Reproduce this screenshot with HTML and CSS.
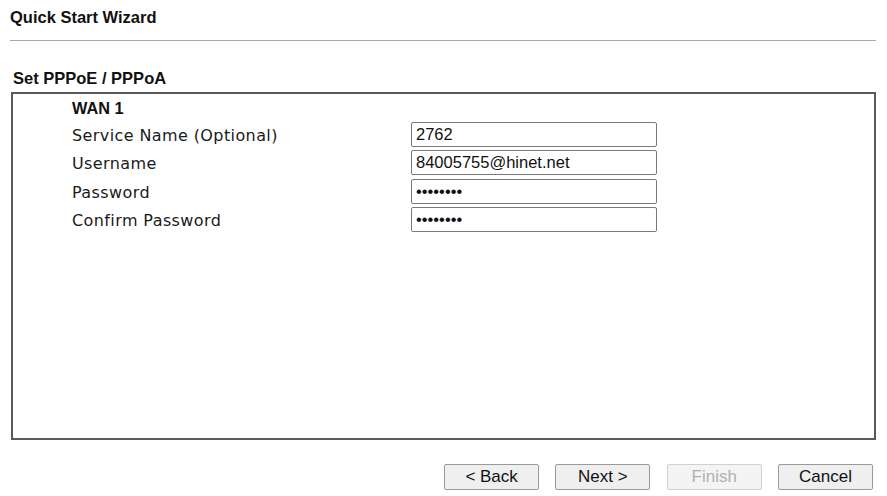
FILE: index.html
```html
<!DOCTYPE html>
<html>
<head>
<meta charset="utf-8">
<link rel="stylesheet" href="styles.css">
</head>
<body>
<div class="page">
  <h1 class="title">Quick Start Wizard</h1>
  <hr class="rule">
  <h2 class="section">Set PPPoE / PPPoA</h2>
  <div class="box">
    <div class="wan">WAN 1</div>
    <div class="row"><span class="label">Service Name (Optional)</span><input class="field" type="text" value="2762"></div>
    <div class="row"><span class="label">Username</span><input class="field" type="text" value="84005755@hinet.net"></div>
    <div class="row"><span class="label">Password</span><input class="field" type="password" value="12345678"></div>
    <div class="row"><span class="label">Confirm Password</span><input class="field" type="password" value="12345678"></div>
  </div>
  <div class="buttons">
    <button class="btn">&lt; Back</button>
    <button class="btn">Next &gt;</button>
    <button class="btn" disabled>Finish</button>
    <button class="btn">Cancel</button>
  </div>
</div>
</body>
</html>
```
FILE: styles.css
```css
html, body {
  margin: 0;
  padding: 0;
  background: #fff;
}
.page {
  width: 887px;
  height: 496px;
  box-sizing: border-box;
  padding: 0 11px 0 10px;
  font-family: "Liberation Sans", Arial, sans-serif;
  color: #111;
}
.title {
  margin: 0;
  padding-top: 8px;
  font-size: 16.5px;
  font-weight: bold;
  line-height: 19px;
  height: 33px;
  box-sizing: border-box;
}
.rule {
  margin: 0;
  border: 0;
  height: 1px;
  background: #a8a8a8;
  margin-top: 7px;
}
.section {
  margin: 0;
  margin-top: 28px;
  padding-left: 3px;
  font-size: 16.5px;
  font-weight: bold;
  line-height: 19px;
}
.box {
  margin-top: 4px;
  margin-left: 1px;
  height: 348px;
  box-sizing: border-box;
  border: 2px solid #5a5a5a;
  padding: 5px 0 0 59px;
}
.wan {
  font-weight: bold;
  font-size: 16.3px;
  line-height: 19px;
  height: 21px;
}
.row {
  display: flex;
  align-items: center;
  height: 28.5px;
}
.label {
  width: 339px;
  font-family: "DejaVu Sans", Verdana, sans-serif;
  font-size: 16px;
  color: #1a1a1a;
  letter-spacing: 0.4px;
  position: relative;
  top: 1px;
}
.field {
  width: 246px;
  height: 25px;
  box-sizing: border-box;
  border: 1px solid #7a7a7a;
  border-radius: 2px;
  padding: 0 4px;
  font-family: "Liberation Sans", Arial, sans-serif;
  font-size: 16.5px;
  color: #111;
  background: #fff;
  margin: 0;
}
.buttons {
  display: flex;
  justify-content: flex-end;
  gap: 16.3px;
  margin-top: 24px;
  padding-right: 3px;
}
.btn {
  width: 95px;
  height: 26px;
  box-sizing: border-box;
  border: 1px solid #9a9a9a;
  border-radius: 2px;
  background: #efefef;
  font-family: "Liberation Sans", Arial, sans-serif;
  font-size: 17px;
  color: #111;
  padding: 0;
  margin: 0;
}
.btn:disabled {
  color: #b0b0b0;
  border-color: #d0d0d0;
  background: #f4f4f4;
}
```
